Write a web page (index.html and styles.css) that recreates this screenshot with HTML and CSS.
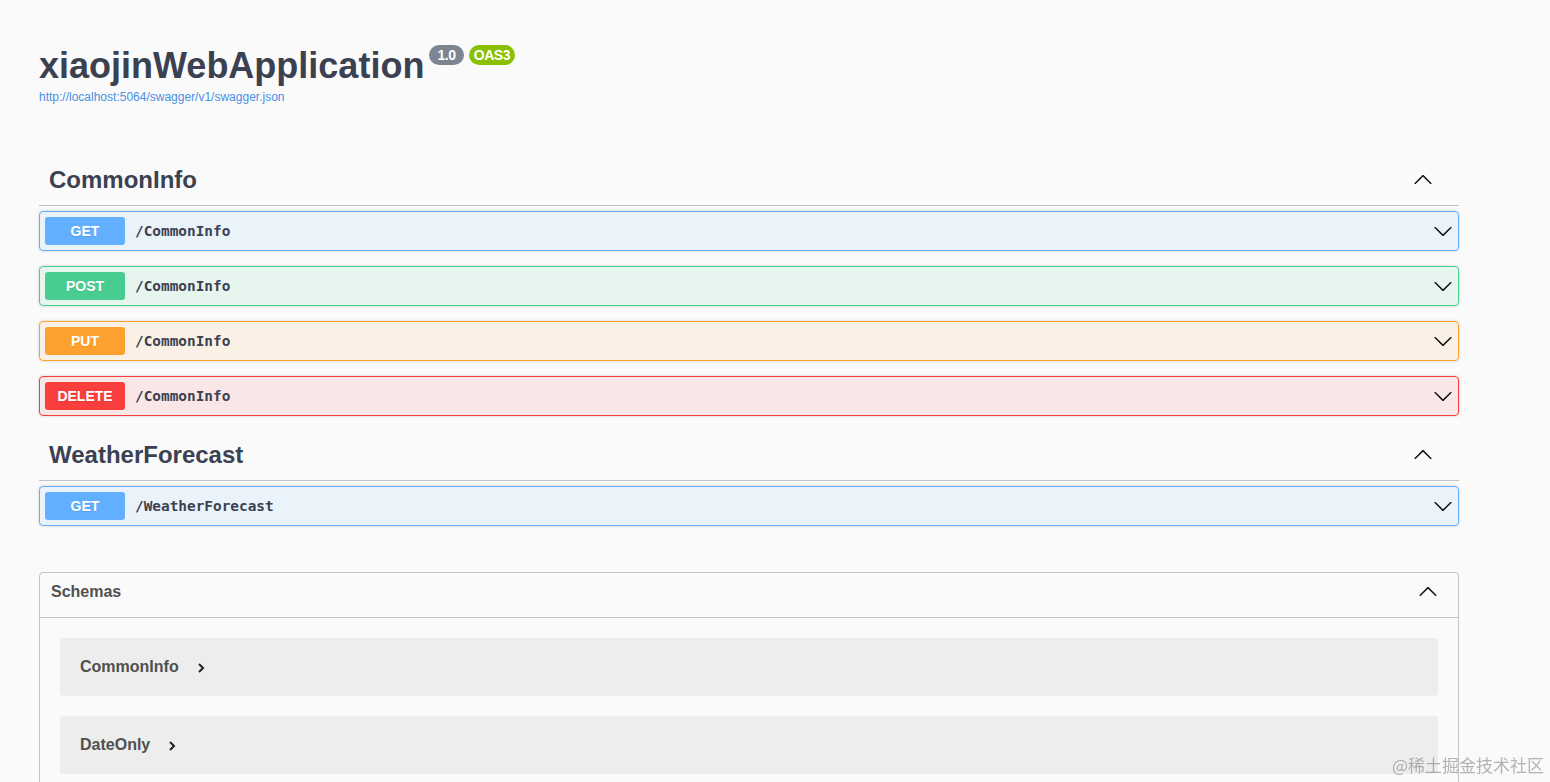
FILE: index.html
```html
<!DOCTYPE html>
<html lang="en">
<head>
<meta charset="utf-8">
<title>Swagger UI</title>
<link rel="stylesheet" href="styles.css">
</head>
<body>
<div class="wrapper">
  <section class="info">
    <h2 class="title">xiaojinWebApplication <span class="badges"><span class="badge version">1.0</span><span class="badge oas">OAS3</span></span></h2>
    <a class="url" href="#">http://localhost:5064/swagger/v1/swagger.json</a>
  </section>

  <section class="tag">
    <h3 class="tag-head"><span class="tag-name">CommonInfo</span>
      <svg class="arrow up" viewBox="0 0 20 20" width="20" height="20"><path d="M17.418 6.109c.272-.268.709-.268.979 0s.271.701 0 .969l-7.908 7.83c-.27.268-.707.268-.979 0l-7.908-7.83c-.27-.268-.27-.701 0-.969.271-.268.709-.268.979 0L10 13.25l7.418-7.141z"/></svg>
    </h3>
    <div class="op get"><span class="method">GET</span><span class="path">/CommonInfo</span>
      <svg class="arrow" viewBox="0 0 20 20" width="20" height="20"><path d="M17.418 6.109c.272-.268.709-.268.979 0s.271.701 0 .969l-7.908 7.83c-.27.268-.707.268-.979 0l-7.908-7.83c-.27-.268-.27-.701 0-.969.271-.268.709-.268.979 0L10 13.25l7.418-7.141z"/></svg></div>
    <div class="op post"><span class="method">POST</span><span class="path">/CommonInfo</span>
      <svg class="arrow" viewBox="0 0 20 20" width="20" height="20"><path d="M17.418 6.109c.272-.268.709-.268.979 0s.271.701 0 .969l-7.908 7.83c-.27.268-.707.268-.979 0l-7.908-7.83c-.27-.268-.27-.701 0-.969.271-.268.709-.268.979 0L10 13.25l7.418-7.141z"/></svg></div>
    <div class="op put"><span class="method">PUT</span><span class="path">/CommonInfo</span>
      <svg class="arrow" viewBox="0 0 20 20" width="20" height="20"><path d="M17.418 6.109c.272-.268.709-.268.979 0s.271.701 0 .969l-7.908 7.83c-.27.268-.707.268-.979 0l-7.908-7.83c-.27-.268-.27-.701 0-.969.271-.268.709-.268.979 0L10 13.25l7.418-7.141z"/></svg></div>
    <div class="op delete"><span class="method">DELETE</span><span class="path">/CommonInfo</span>
      <svg class="arrow" viewBox="0 0 20 20" width="20" height="20"><path d="M17.418 6.109c.272-.268.709-.268.979 0s.271.701 0 .969l-7.908 7.83c-.27.268-.707.268-.979 0l-7.908-7.83c-.27-.268-.27-.701 0-.969.271-.268.709-.268.979 0L10 13.25l7.418-7.141z"/></svg></div>
  </section>

  <section class="tag">
    <h3 class="tag-head"><span class="tag-name">WeatherForecast</span>
      <svg class="arrow up" viewBox="0 0 20 20" width="20" height="20"><path d="M17.418 6.109c.272-.268.709-.268.979 0s.271.701 0 .969l-7.908 7.83c-.27.268-.707.268-.979 0l-7.908-7.83c-.27-.268-.27-.701 0-.969.271-.268.709-.268.979 0L10 13.25l7.418-7.141z"/></svg>
    </h3>
    <div class="op get"><span class="method">GET</span><span class="path">/WeatherForecast</span>
      <svg class="arrow" viewBox="0 0 20 20" width="20" height="20"><path d="M17.418 6.109c.272-.268.709-.268.979 0s.271.701 0 .969l-7.908 7.83c-.27.268-.707.268-.979 0l-7.908-7.83c-.27-.268-.27-.701 0-.969.271-.268.709-.268.979 0L10 13.25l7.418-7.141z"/></svg></div>
  </section>

  <section class="models">
    <h4 class="models-head"><span>Schemas</span>
      <svg class="arrow up" viewBox="0 0 20 20" width="20" height="20"><path d="M17.418 6.109c.272-.268.709-.268.979 0s.271.701 0 .969l-7.908 7.83c-.27.268-.707.268-.979 0l-7.908-7.83c-.27-.268-.27-.701 0-.969.271-.268.709-.268.979 0L10 13.25l7.418-7.141z"/></svg>
    </h4>
    <div class="models-body">
      <div class="model"><span class="model-name">CommonInfo</span>
        <svg class="chev" viewBox="0 0 8 12" width="8" height="12"><path d="M2 2l4 4-4 4" fill="none" stroke="#222" stroke-width="2"/></svg></div>
      <div class="model"><span class="model-name">DateOnly</span>
        <svg class="chev" viewBox="0 0 8 12" width="8" height="12"><path d="M2 2l4 4-4 4" fill="none" stroke="#222" stroke-width="2"/></svg></div>
    </div>
  </section>
</div>
<div class="watermark">@稀土掘金技术社区</div>
</body>
</html>
```

FILE: styles.css
```css
html, body {
  margin: 0;
  padding: 0;
  background: #fafafa;
  font-family: "Liberation Sans", Arial, sans-serif;
  color: #3b4151;
}
.wrapper {
  width: 1420px;
  padding: 0 0 0 39px;
}
.info {
  padding-top: 46px;
  height: 160px;
  box-sizing: border-box;
}
.title {
  margin: 0;
  font-size: 36px;
  line-height: 40px;
  font-weight: 700;
  color: #3b4151;
  display: flex;
  align-items: flex-start;
}
.badges {
  display: inline-flex;
  gap: 5px;
  margin-left: 5px;
  margin-top: -1px;
}
.badge {
  font-size: 14px;
  line-height: 16px;
  font-weight: 700;
  color: #fff;
  border-radius: 57px;
  letter-spacing: -0.4px;
}
.version { background: #7d8492; padding: 2px 8px; }
.oas { background: #89bf04; padding: 2px 5px; }
.url {
  display: block;
  margin-top: 4px;
  font-size: 12px;
  color: #4990e2;
  text-decoration: none;
}
.tag {
  padding-bottom: 4px;
}
.tag-head {
  margin: 0 0 5px;
  padding: 5px 26px 10px 10px;
  height: 30px;
  display: flex;
  align-items: center;
  justify-content: space-between;
  border-bottom: 1px solid rgba(59, 65, 81, 0.3);
  font-size: 24px;
  font-weight: 700;
}
.arrow {
  fill: #111;
  flex: none;
}
.arrow.up {
  transform: rotate(180deg);
}
.op {
  display: flex;
  align-items: center;
  height: 28px;
  padding: 5px;
  margin-bottom: 15px;
  border: 1px solid;
  border-radius: 4px;
  box-shadow: 0 0 3px rgba(0, 0, 0, 0.19);
}
.method {
  width: 80px;
  height: 28px;
  line-height: 28px;
  text-align: center;
  border-radius: 3px;
  color: #fff;
  font-size: 14px;
  font-weight: 700;
  text-shadow: 0 1px 0 rgba(0, 0, 0, 0.1);
}
.path {
  flex: 1;
  margin-left: 10px;
  font-family: "DejaVu Sans Mono", "Liberation Mono", monospace;
  font-size: 14.4px;
  font-weight: 700;
  color: #3b4151;
}
.get { background: rgba(97, 175, 254, 0.1); border-color: #61affe; }
.get .method { background: #61affe; }
.post { background: rgba(73, 204, 144, 0.1); border-color: #49cc90; }
.post .method { background: #49cc90; }
.put { background: rgba(252, 161, 48, 0.1); border-color: #fca130; }
.put .method { background: #fca130; }
.delete { background: rgba(249, 62, 62, 0.1); border-color: #f93e3e; }
.delete .method { background: #f93e3e; }

.models {
  margin-top: 27px;
  border: 1px solid rgba(59, 65, 81, 0.3);
  border-radius: 4px;
}
.models-head {
  margin: 0;
  padding: 10px 20px 16px 11px;
  height: 18px;
  display: flex;
  align-items: center;
  justify-content: space-between;
  border-bottom: 1px solid rgba(59, 65, 81, 0.3);
  font-size: 16px;
  font-weight: 700;
  color: #505050;
}
.models-body {
  padding: 20px 20px 40px;
  display: flex;
  flex-direction: column;
  gap: 20px;
}
.model {
  height: 58px;
  padding: 0 20px;
  display: flex;
  align-items: center;
  gap: 18px;
  background: rgba(0, 0, 0, 0.05);
  border-radius: 4px;
}
.model-name {
  font-size: 16px;
  font-weight: 700;
  color: #505050;
}
.chev {
  margin-top: 2px;
}
.watermark {
  position: fixed;
  right: 6px;
  bottom: 7px;
  font-family: "Noto Sans CJK SC", sans-serif;
  font-size: 17px;
  line-height: 20px;
  color: rgba(120, 120, 120, 0.55);
}
```
